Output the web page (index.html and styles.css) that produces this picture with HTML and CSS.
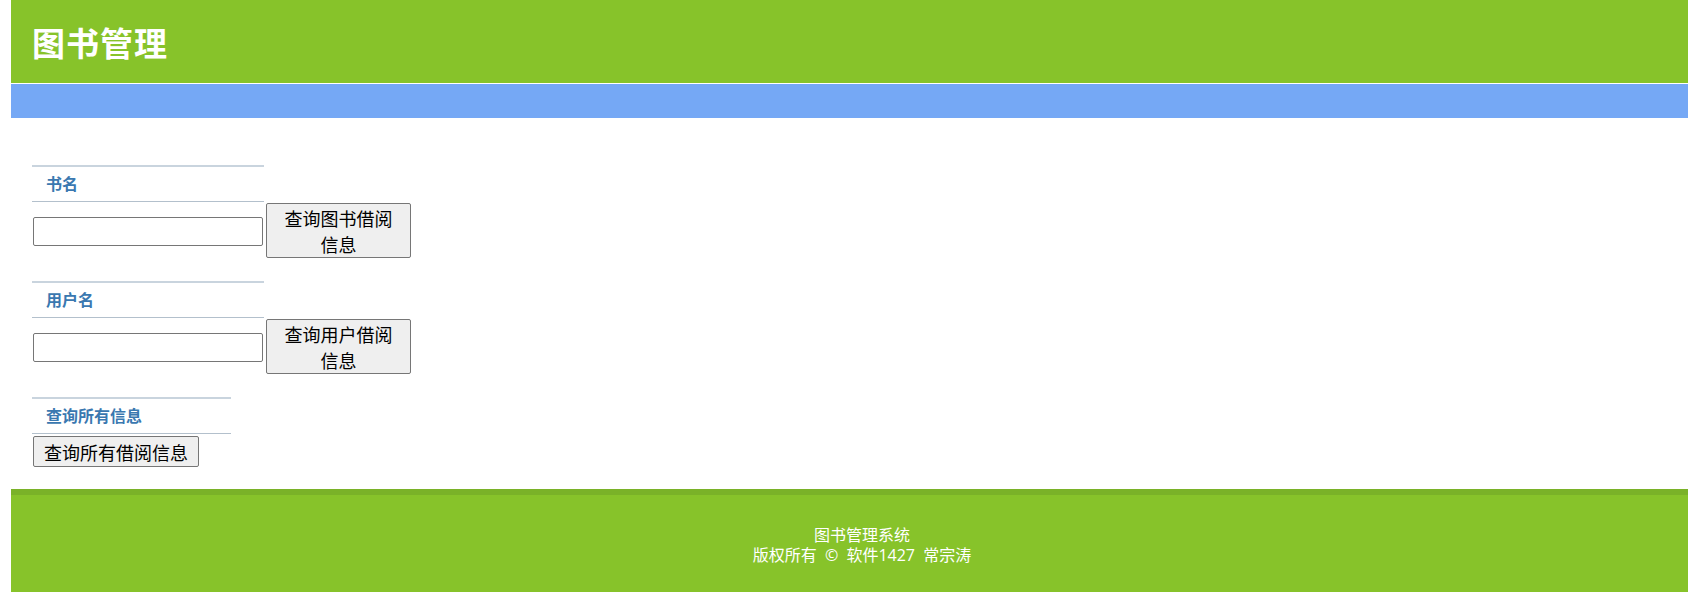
FILE: index.html
```html
<!DOCTYPE html>
<html lang="zh-CN">
<head>
<meta charset="utf-8">
<title>图书管理</title>
<link rel="stylesheet" href="styles.css">
</head>
<body>
<div class="page">
  <header class="top">
    <h1 class="title">图书管理</h1>
  </header>
  <div class="nav"></div>
  <main class="content">
    <section class="section">
      <div class="section-head">书名</div>
      <div class="section-row">
        <input class="field" type="text">
        <button class="btn btn-wrap">查询图书借阅信息</button>
      </div>
    </section>
    <section class="section">
      <div class="section-head">用户名</div>
      <div class="section-row">
        <input class="field" type="text">
        <button class="btn btn-wrap">查询用户借阅信息</button>
      </div>
    </section>
    <section class="section">
      <div class="section-head section-head-narrow">查询所有信息</div>
      <div class="section-row section-row-tight">
        <button class="btn btn-all">查询所有借阅信息</button>
      </div>
    </section>
  </main>
  <footer class="foot">
    <div class="foot-text">
      <div>图书管理系统</div>
      <div class="foot-copy">版权所有 © 软件1427 常宗涛</div>
    </div>
  </footer>
</div>
</body>
</html>
```
FILE: styles.css
```css
html, body {
  margin: 0;
  padding: 0;
  background: #ffffff;
  overflow: hidden;
}
body {
  font-family: "Noto Sans CJK SC", "Noto Sans", sans-serif;
}
.page {
  margin-left: 11px;
}
.top {
  height: 83px;
  background: #87c32a;
  border-bottom: 1px solid #ffffff;
  display: flex;
  align-items: center;
  padding-left: 21px;
}
.title {
  margin: 0;
  color: #ffffff;
  font-size: 33px;
  font-weight: 700;
  line-height: 40px;
  letter-spacing: 1px;
}
.nav {
  height: 34px;
  background: #75a8f5;
}
.content {
  padding: 47px 0 22px 21px;
}
.section + .section {
  margin-top: 23px;
}
.section-head {
  width: 218px;
  height: 32px;
  padding-left: 14px;
  padding-bottom: 2px;
  border-top: 2px solid #c9d4de;
  border-bottom: 1px solid #b3c0cc;
  display: flex;
  align-items: center;
  color: #3a78b0;
  font-size: 16px;
  font-weight: 700;
  line-height: 20px;
}
.section-head-narrow {
  width: 185px;
}
.section-row {
  display: flex;
  align-items: center;
  margin-top: 1px;
}
.section-row-tight {
  margin-top: 2px;
}
.field {
  box-sizing: border-box;
  width: 230px;
  height: 29px;
  margin: 2px 0 0 1px;
  border: 1px solid #767676;
  border-radius: 2px;
  background: #ffffff;
  padding: 0 4px;
}
.btn {
  box-sizing: border-box;
  background: #efefef;
  border: 1px solid #767676;
  border-radius: 2px;
  color: #000000;
  font-family: "Noto Sans CJK SC", "Noto Sans", sans-serif;
  font-size: 18px;
  margin: 0;
  padding: 0;
}
.btn-wrap {
  width: 145px;
  height: 55px;
  margin-left: 3px;
  line-height: 26px;
  padding: 0 14px;
}
.btn-all {
  width: 166px;
  height: 31px;
  margin-left: 1px;
  line-height: 26px;
  padding: 0 10px;
}
.foot {
  border-top: 6px solid #7ab228;
  background: #87c32a;
  height: 110px;
  color: #ffffff;
  display: flex;
  justify-content: center;
  padding-left: 25px;
}
.foot-text {
  padding-top: 29px;
  text-align: center;
  font-size: 16px;
  line-height: 21px;
}
.foot-copy {
  font-family: "Open Sans", "Noto Sans CJK SC", sans-serif;
  word-spacing: 4px;
}
```
